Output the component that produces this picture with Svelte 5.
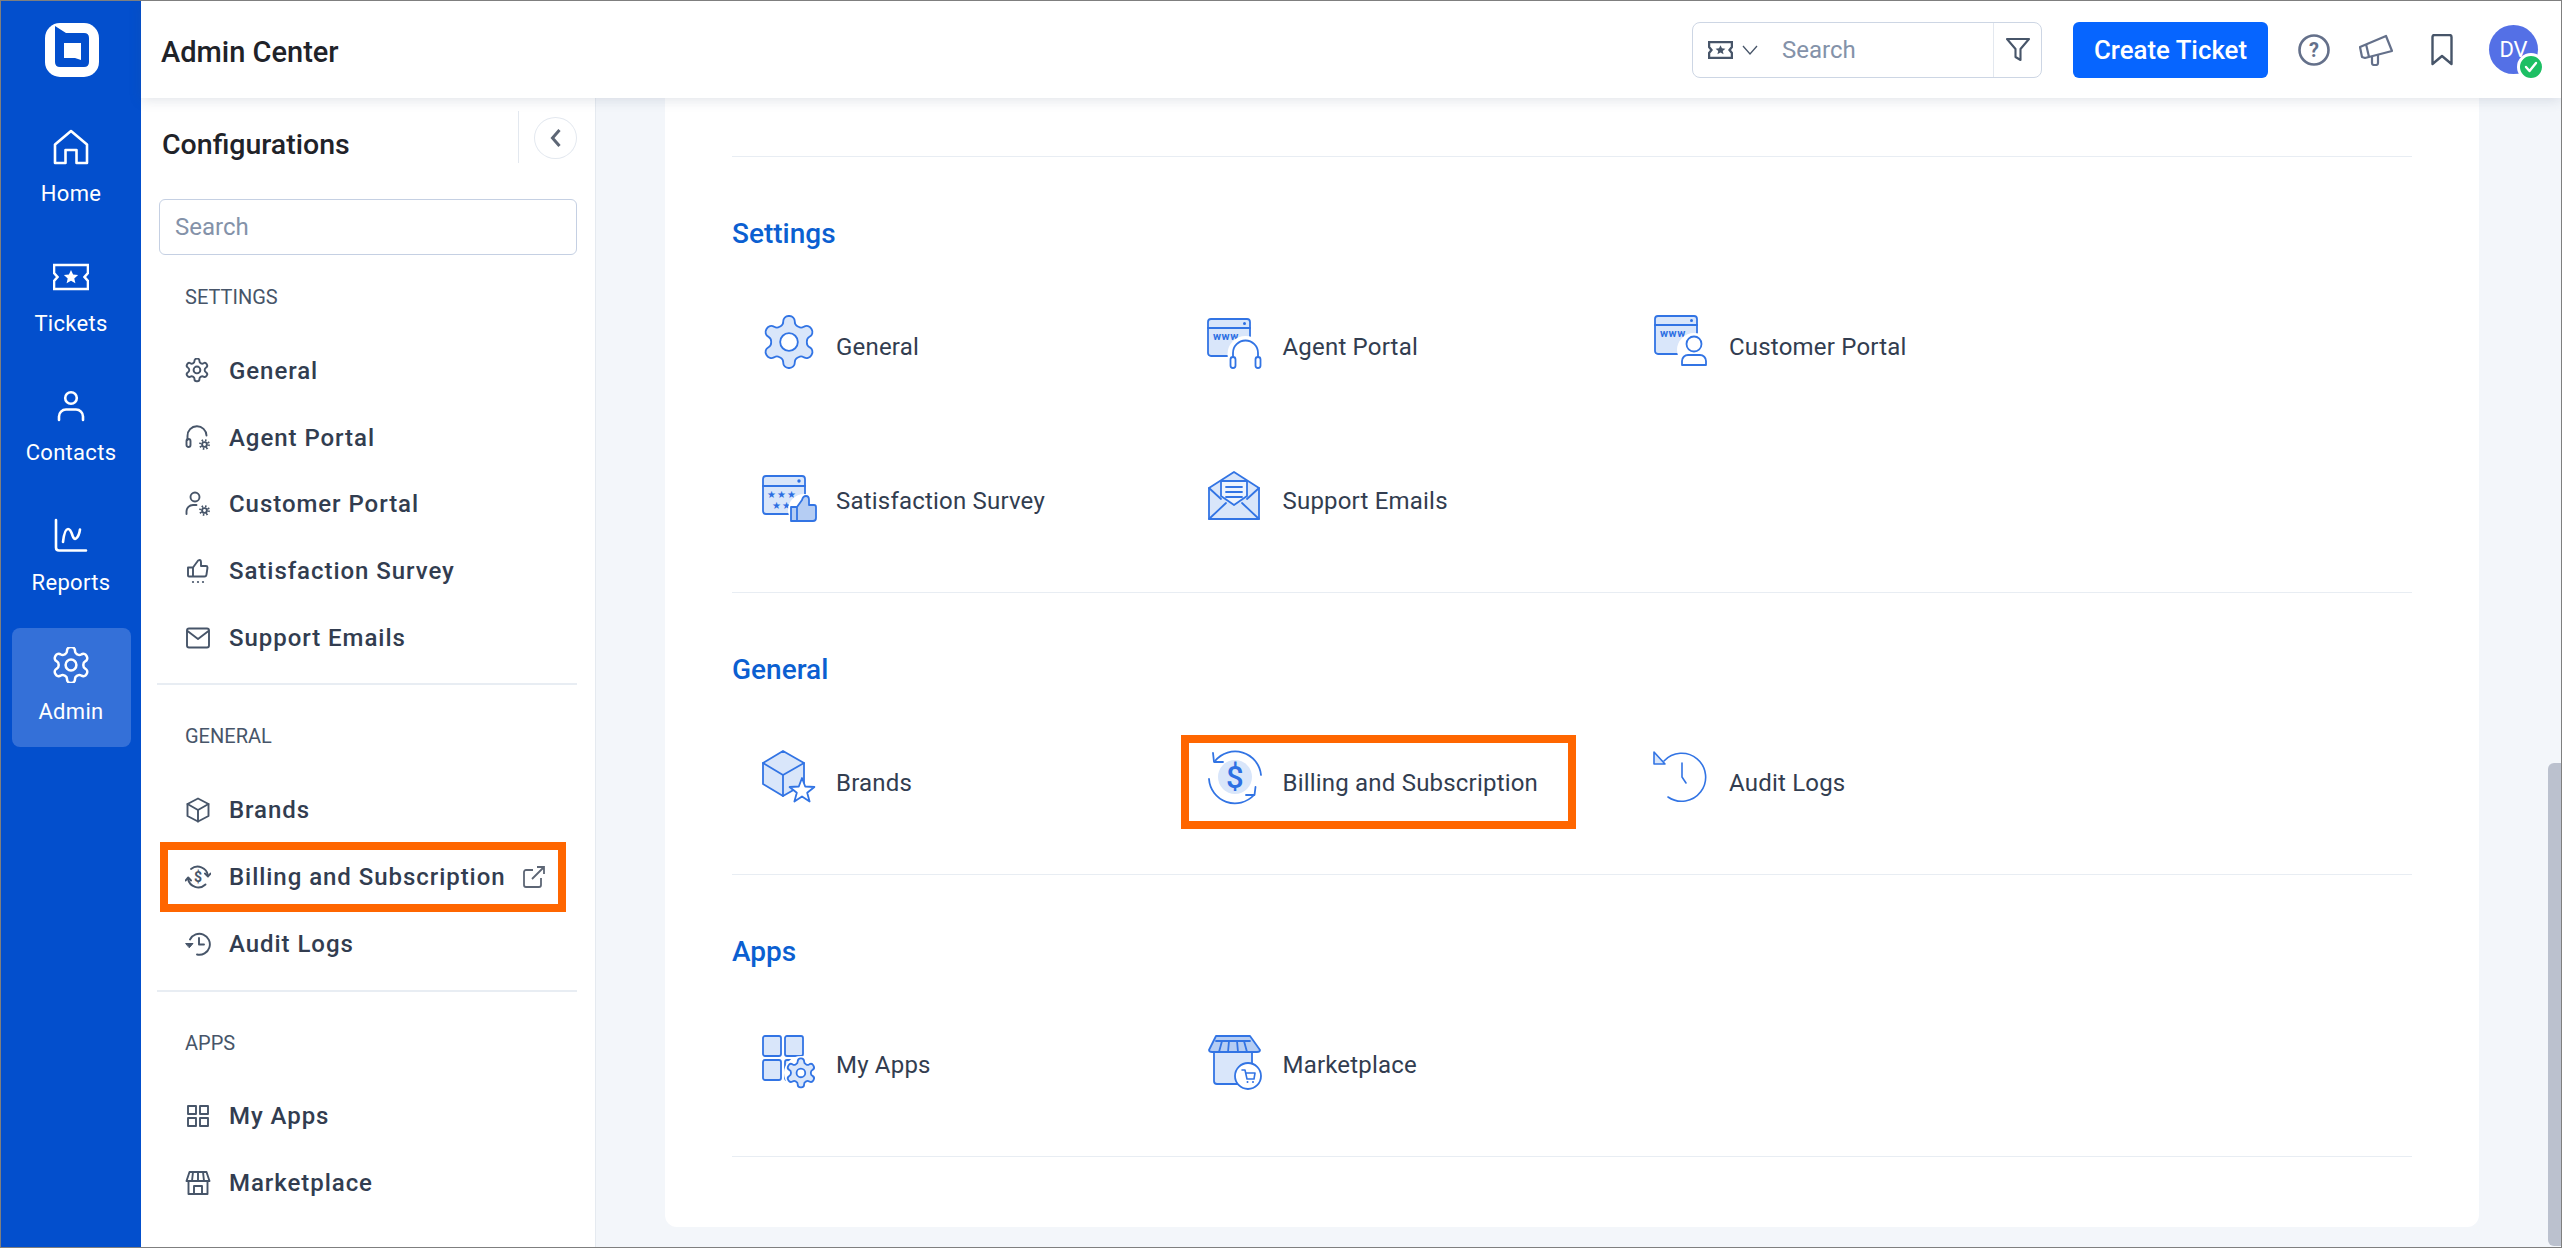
<script>
  const GEAR = 'M12.22 2h-.44a2 2 0 0 0-2 2v.18a2 2 0 0 1-1 1.73l-.43.25a2 2 0 0 1-2 0l-.15-.08a2 2 0 0 0-2.73.73l-.22.38a2 2 0 0 0 .73 2.73l.15.1a2 2 0 0 1 1 1.72v.51a2 2 0 0 1-1 1.74l-.15.09a2 2 0 0 0-.73 2.73l.22.38a2 2 0 0 0 2.73.73l.15-.08a2 2 0 0 1 2 0l.43.25a2 2 0 0 1 1 1.73V20a2 2 0 0 0 2 2h.44a2 2 0 0 0 2-2v-.18a2 2 0 0 1 1-1.73l.43-.25a2 2 0 0 1 2 0l.15.08a2 2 0 0 0 2.73-.73l.22-.39a2 2 0 0 0-.73-2.73l-.15-.08a2 2 0 0 1-1-1.74v-.5a2 2 0 0 1 1-1.74l.15-.09a2 2 0 0 0 .73-2.73l-.22-.38a2 2 0 0 0-2.73-.73l-.15.08a2 2 0 0 1-2 0l-.43-.25a2 2 0 0 1-1-1.73V4a2 2 0 0 0-2-2z'

  const nav = [
    { id: 'home', label: 'Home' },
    { id: 'tickets', label: 'Tickets' },
    { id: 'contacts', label: 'Contacts' },
    { id: 'reports', label: 'Reports' },
    { id: 'admin', label: 'Admin', active: true }
  ]

  const sections = [
    {
      title: 'Settings',
      items: [
        { id: 'general', label: 'General' },
        { id: 'agent', label: 'Agent Portal' },
        { id: 'customer', label: 'Customer Portal' },
        { id: 'survey', label: 'Satisfaction Survey' },
        { id: 'emails', label: 'Support Emails' }
      ]
    },
    {
      title: 'General',
      items: [
        { id: 'brands', label: 'Brands' },
        { id: 'billing', label: 'Billing and Subscription', marked: true, external: true },
        { id: 'audit', label: 'Audit Logs' }
      ]
    },
    {
      title: 'Apps',
      items: [
        { id: 'apps', label: 'My Apps' },
        { id: 'market', label: 'Marketplace' }
      ]
    }
  ]
</script>

{#snippet navIcon(id)}
  <svg width="36" height="36" viewBox="0 0 36 36" fill="none" stroke="#fff" stroke-width="2.6" stroke-linejoin="round" stroke-linecap="round">
    {#if id === 'home'}
      <path d="M2 15.500 18 2l16 13.500V34H23.500V21h-11v13H2z" />
    {:else if id === 'tickets'}
      <path d="M1 6h34v8l-3.500 4 3.500 4v8H1v-8l3.500-4L1 14z" stroke-linejoin="miter" />
      <path d="m18 11 2.100 4.600 5 .5-3.800 3.300 1.100 4.900-4.400-2.600-4.400 2.600 1.100-4.900-3.800-3.300 5-.5z" fill="#fff" stroke="none" />
    {:else if id === 'contacts'}
      <circle cx="18" cy="10" r="5.800" />
      <path d="M6 32v-3.500a7 7 0 0 1 7-7h10a7 7 0 0 1 7 7V32" />
    {:else if id === 'reports'}
      <path d="M3 2v27.500q0 3 3 3h27" />
      <path d="M10 24q1.500-13 5-13 2.500 0 4.500 6.500 1.500 4.500 3.500 3 3-2 4-9" />
    {:else}
      <g transform="translate(-3.600 -3.600) scale(1.8)" stroke-width="1.400">
        <path d={GEAR} />
        <circle cx="12" cy="12" r="3" />
      </g>
    {/if}
  </svg>
{/snippet}

{#snippet sideIcon(id)}
  <svg width="26" height="26" viewBox="0 0 26 26" fill="none" stroke="#475569" stroke-width="1.900" stroke-linecap="round" stroke-linejoin="round">
    {#if id === 'general'}
      <g transform="translate(-1.600 -1.600) scale(1.130)" stroke-width="1.700">
        <path d={GEAR} />
        <circle cx="12" cy="12" r="3" />
      </g>
    {:else if id === 'agent'}
      <path d="M2.500 15v-4a9.500 9.500 0 0 1 19-.5" />
      <rect x="1.500" y="14" width="4" height="8" rx="2" />
      <circle cx="19.500" cy="19.500" r="2.400" />
      <circle cx="19.500" cy="19.500" r="4.300" stroke-dasharray="1.500 1.880" stroke-width="2.200" stroke-linecap="butt" />
    {:else if id === 'customer'}
      <circle cx="10" cy="6" r="4.500" />
      <path d="M1.500 23v-2.500a6.500 6.500 0 0 1 6.500-6.500h3.500" />
      <circle cx="19.500" cy="19.500" r="2.400" />
      <circle cx="19.500" cy="19.500" r="4.300" stroke-dasharray="1.500 1.880" stroke-width="2.200" stroke-linecap="butt" />
    {:else if id === 'survey'}
      <path d="M3 9.500h5v9H4a1 1 0 0 1-1-1zM8 9.500l4-5.500q1-2 2.500-2t1.500 2.500v3.500h5q1.500 0 1.500 1.500l-1 7q-.2 2-2 2H8" />
      <circle cx="8" cy="24" r="1.100" fill="#475569" stroke="none" />
      <circle cx="13" cy="24" r="1.100" fill="#475569" stroke="none" />
      <circle cx="18" cy="24" r="1.100" fill="#475569" stroke="none" />
    {:else if id === 'emails'}
      <rect x="2" y="3.500" width="22" height="19" rx="2" />
      <path d="m2.500 6 10.500 8 10.500-8" />
    {:else if id === 'brands'}
      <path d="M13 1.500 23.500 7v12L13 24.500 2.500 19V7z" />
      <path d="M2.500 7 13 13l10.500-6M13 13v11.500" />
    {:else if id === 'billing'}
      <path d="M6 5A10.500 10.500 0 0 1 23 11.500M20.500 20.500A10.500 10.500 0 0 1 3 15" />
      <path d="m20 9.500 3 3 2.500-3M.5 16.500l2.700-3 2.800 3" />
      <text x="13.500" y="18" font-size="14" font-weight="700" text-anchor="middle" fill="#475569" stroke="none" font-family="Roboto, sans-serif">$</text>
    {:else if id === 'audit'}
      <path d="M5 8.500A10.500 10.500 0 1 1 12 23.500" />
      <path d="M1 12.500h7l-3.500 4z" fill="#475569" stroke-width="1" />
      <path d="M14 7v6.500h5" />
    {:else if id === 'apps'}
      <rect x="3" y="3" width="8" height="8" />
      <rect x="15" y="3" width="8" height="8" />
      <rect x="3" y="15" width="8" height="8" />
      <rect x="15" y="15" width="8" height="8" />
    {:else}
      <path d="M4.500 2h17l3 9h-23zM8 2l-1 9M13 2v9M18 2l1 9" />
      <path d="M3.500 11v13h19V11M9 24v-8h8v8" />
    {/if}
  </svg>
{/snippet}

{#snippet bigIcon(id)}
  <svg class="big" width="60" height="60" viewBox="0 0 60 60" fill="#d9e6fa" stroke="#3274e4" stroke-width="1.800" stroke-linejoin="round" stroke-linecap="round">
    {#if id === 'general'}
      <g transform="translate(-2.200 -2.200) scale(2.600)" stroke-width=".7">
        <path d={GEAR} />
        <circle cx="12" cy="12" r="3.400" fill="#fff" />
      </g>
    {:else if id === 'agent'}
      <rect x="1" y="6" width="42" height="37" rx="3" />
      <path d="M1 15h42" />
      <circle cx="37.500" cy="10.500" r="1.500" fill="#2c6fe3" stroke="none" />
      <text x="6" y="27" class="www">www</text>
      <circle cx="38.500" cy="41" r="18" fill="#fff" stroke="none" />
      <path d="M26 46v-6a12.500 12.500 0 0 1 25 0v6" fill="none" />
      <rect x="23.500" y="44" width="5" height="11" rx="2.500" fill="#fff" />
      <rect x="48.500" y="44" width="5" height="11" rx="2.500" fill="#fff" />
    {:else if id === 'customer'}
      <rect x="2" y="3" width="42" height="38" rx="3" />
      <path d="M2 12h42" />
      <circle cx="38.500" cy="7.500" r="1.500" fill="#2c6fe3" stroke="none" />
      <text x="7" y="24" class="www">www</text>
      <circle cx="41" cy="37" r="17" fill="#fff" stroke="none" />
      <circle cx="41" cy="31" r="7.500" fill="#fff" />
      <path d="M29 52v-4a6 6 0 0 1 6-6h12a6 6 0 0 1 6 6v4z" fill="#fff" />
    {:else if id === 'survey'}
      <rect x="3" y="9" width="42" height="38" rx="3" />
      <path d="M3 19h42" />
      <circle cx="39" cy="14" r="1.700" fill="#2c6fe3" stroke="none" />
      <text x="7" y="31" class="stars">★★★</text>
      <text x="12" y="42" class="stars">★★</text>
      <circle cx="44" cy="43" r="16" fill="#fff" stroke="none" />
      <path d="M31 40h6v14h-6zM37 40l5-7q1-4 4-4 3 0 3 4v5h5q2 0 2 2v11q0 3-3 3H37z" fill="#b5cdf3" />
    {:else if id === 'emails'}
      <path d="M2 21 27 5l25 16v31H2z" />
      <path d="M14 29V14h26v15l-13 9z" fill="#edf3fd" />
      <path d="M19 20h16M19 25h16M19 30h16" />
      <path d="M2 52l17-16M52 52 35 36M2 21l12 11M52 21 40 32" />
    {:else if id === 'brands'}
      <path d="M23 2 44 14v21L23 47 3 35V14z" />
      <path d="m3 14 20 12 21-12M23 26v21" />
      <path d="m42 29 3.200 8.500 9.200.5-7.200 5.700 2.400 8.800-7.600-5-7.600 5 2.400-8.800-7.200-5.700 9.200-.5z" fill="#fff" />
    {:else if id === 'billing'}
      <circle cx="28" cy="28" r="17" stroke="none" />
      <text x="28" y="39" class="dollar">$</text>
      <path d="M8 12A26 26 0 0 1 54 26M47 46A26 26 0 0 1 2 30" fill="none" />
      <path d="M6 4l1 9 9 0M39 46h8.500l1-8" fill="none" />
    {:else if id === 'audit'}
      <path d="M11 12A24 24 0 1 1 15 48" fill="none" stroke-width="1.600" />
      <path d="M1 3v12h11z" stroke-width="1.600" />
      <path d="M29 14v14l4 6" fill="none" stroke-width="1.600" />
    {:else if id === 'apps'}
      <rect x="3" y="5" width="18" height="20" rx="2" />
      <rect x="25" y="5" width="18" height="20" rx="2" />
      <rect x="3" y="29" width="18" height="20" rx="2" />
      <rect x="25" y="29" width="18" height="20" rx="2" />
      <circle cx="41" cy="42" r="17" fill="#fff" stroke="none" />
      <g transform="translate(23.500 24.500) scale(1.450)" stroke-width="1.250">
        <path d={GEAR} />
        <circle cx="12" cy="12" r="3" fill="#fff" />
      </g>
    {:else}
      <path d="M7 20h38v33H10q-3 0-3-3z" />
      <path d="M9 5h34l10 14q0 2-3 2H5q-3 0-3-2z" fill="#b5cdf3" />
      <path d="M9 10h34M15 10l-3 11M22 10l-1 11M30 10l1 11M37 10l3 11" />
      <circle cx="41" cy="45" r="13" fill="#fff" />
      <path d="M35 39h3l2 9h7l1-6h-9" fill="none" stroke-width="1.600" />
      <circle cx="40.500" cy="51" r="1" fill="#2c6fe3" stroke="none" />
      <circle cx="46" cy="51" r="1" fill="#2c6fe3" stroke="none" />
    {/if}
  </svg>
{/snippet}

<div class="window">
  <aside class="rail">
    <svg class="logo" width="54" height="54" viewBox="0 0 54 54">
      <rect width="54" height="54" rx="15" fill="#fff" />
      <path d="M10 3 21 10h18q5 0 5 5v24q0 5-5 5H15q-5 0-5-5z" fill="#034fcd" />
      <path d="M19 20h17v17l-6-2H19z" fill="#fff" />
    </svg>
    <nav class="rail-nav">
      {#each nav as item}
        <a class="rail-item" class:active={item.active} href="#top">
          {@render navIcon(item.id)}
          <span>{item.label}</span>
        </a>
      {/each}
    </nav>
  </aside>

  <div class="page">
    <header class="topbar">
      <h1>Admin Center</h1>
      <div class="global-search">
        <svg class="type-icon" width="25" height="18" viewBox="0 0 36 26" fill="none" stroke="#475569" stroke-width="3.400">
          <path d="M1.500 1.500h33v7l-3.500 4.500 3.500 4.500v7h-33v-7L5 13 1.500 8.500z" />
          <path d="m18 6 2.100 4.600 5 .5-3.800 3.300 1.100 4.900-4.400-2.600-4.400 2.600 1.100-4.900-3.800-3.300 5-.5z" fill="#475569" stroke="none" />
        </svg>
        <svg class="chev" width="16" height="10" viewBox="0 0 16 10" fill="none" stroke="#475569" stroke-width="1.300"><path d="m1 1 7 8 7-8" /></svg>
        <input placeholder="Search" />
        <span class="filter">
          <svg width="24" height="25" viewBox="0 0 24 25" fill="none" stroke="#475569" stroke-width="2.100" stroke-linejoin="round"><path d="M1 2h22l-8.500 10v11l-5-3v-8z" /></svg>
        </span>
      </div>
      <button class="create">Create Ticket</button>
      <svg class="help" width="32" height="32" viewBox="0 0 32 32" fill="none" stroke="#64708a" stroke-width="2.600">
        <circle cx="16" cy="16" r="14.500" />
        <text x="16" y="23" font-size="20" font-weight="700" text-anchor="middle" fill="#64708a" stroke="none" font-family="Roboto, sans-serif">?</text>
      </svg>
      <svg class="mega" width="36" height="32" viewBox="0 0 36 32" fill="none" stroke="#64708a" stroke-width="2.200" stroke-linejoin="round">
        <path d="M2 13 28 2l6 15-27 7-3-1z" />
        <path d="M8 10 11 23" />
        <path d="M14 22.500V29a2 2 0 0 0 2 2h2a2 2 0 0 0 2-2v-8" />
      </svg>
      <svg class="mark" width="22" height="32" viewBox="0 0 22 32" fill="none" stroke="#475569" stroke-width="2.400" stroke-linejoin="round"><path d="M1.500 3q0-2 2-2h15q2 0 2 2v27L11 22l-9.500 8z" /></svg>
      <div class="avatar">
        DV
        <span class="badge">
          <svg width="14" height="12" viewBox="0 0 14 12" fill="none" stroke="#fff" stroke-width="2.400" stroke-linecap="round" stroke-linejoin="round"><path d="m2 6 3.500 4L12 2" /></svg>
        </span>
      </div>
    </header>

    <div class="body">
      <aside class="config">
        <div class="config-head">
          <h2>Configurations</h2>
          <button class="collapse" aria-label="Collapse">
            <svg width="12" height="20" viewBox="0 0 12 20" fill="none" stroke="#5d6675" stroke-width="3"><path d="M10 2 3 10l7 8" /></svg>
          </button>
        </div>
        <input class="config-search" placeholder="Search" />
        {#each sections as section, i}
          <div class="group" class:first={i === 0}>
            <div class="group-label">{section.title.toUpperCase()}</div>
            {#each section.items as item}
              <a class="side-item" class:marked={item.marked} href="#top">
                {@render sideIcon(item.id)}
                <span>{item.label}</span>
                {#if item.external}
                  <svg class="ext" width="22" height="22" viewBox="0 0 22 22" fill="none" stroke="#5d6675" stroke-width="1.800"><path d="M10 4H3a2 2 0 0 0-2 2v13a2 2 0 0 0 2 2h13a2 2 0 0 0 2-2v-7M9 13 21 1M14 1h7v7" /></svg>
                {/if}
              </a>
            {/each}
          </div>
        {/each}
      </aside>

      <main class="main">
        <div class="card">
          {#each sections as section}
            <section class="block">
              <h3>{section.title}</h3>
              <div class="tiles">
                {#each section.items as item}
                  <a class="tile" class:marked={item.marked} href="#top">
                    {@render bigIcon(item.id)}
                    <span>{item.label}</span>
                  </a>
                {/each}
              </div>
            </section>
          {/each}
        </div>
        <div class="scroll-thumb"></div>
      </main>
    </div>
  </div>

  <svg class="cursor" width="17" height="28" viewBox="0 0 17 28" fill="#fff" stroke="#333" stroke-width="1.100" stroke-linejoin="round">
    <path d="M1 1v20l5-4 4 9 3-1-4-9h7z" />
  </svg>
</div>

<style>
  :global(body) {
    margin: 0;
    font-family: Roboto, 'Liberation Sans', sans-serif;
  }

  a {
    color: inherit;
    text-decoration: none;
  }

  input {
    font: inherit;
    border: none;
    outline: none;
    background: none;
    color: #2b3548;
  }

  input::placeholder {
    color: #8492a9;
    opacity: 1;
  }

  .window {
    position: relative;
    width: 2562px;
    height: 1248px;
    box-sizing: border-box;
    border: 1px solid #7f7f7f;
    display: flex;
    overflow: hidden;
    background: #fff;
  }

  /* ── Left rail ── */
  .rail {
    width: 140px;
    flex-shrink: 0;
    background: #034fcd;
    display: flex;
    flex-direction: column;
    align-items: center;
  }

  .logo {
    margin: 22px 0 0 1px;
  }

  .rail-nav {
    margin-top: 33px;
    display: flex;
    flex-direction: column;
    gap: 10.5px;
    align-items: center;
  }

  .rail-item {
    width: 119px;
    height: 119px;
    box-sizing: border-box;
    padding-top: 19px;
    border-radius: 8px;
    display: flex;
    flex-direction: column;
    align-items: center;
    gap: 15px;
    color: #fff;
    font-size: 22px;
    letter-spacing: 0.3px;
    line-height: 28px;
  }

  .rail-item.active {
    background: #3470d8;
  }

  /* ── Top bar ── */
  .page {
    flex: 1;
    min-width: 0;
    display: flex;
    flex-direction: column;
  }

  .topbar {
    height: 97px;
    flex-shrink: 0;
    box-sizing: border-box;
    padding: 0 23px 0 20px;
    display: flex;
    align-items: center;
    background: #fff;
    box-shadow: 0 2px 12px rgba(60, 80, 110, 0.16);
    position: relative;
    z-index: 2;
  }

  h1 {
    margin: 4px auto 0 0;
    font-size: 29px;
    font-weight: 500;
    color: #1f2329;
  }

  .global-search {
    width: 350px;
    height: 56px;
    box-sizing: border-box;
    border: 1px solid #cdd6e4;
    border-radius: 8px;
    display: flex;
    align-items: center;
    padding-left: 15px;
    font-size: 24px;
  }

  .chev {
    margin-left: 9px;
  }

  .global-search input {
    flex: 1;
    min-width: 0;
    margin-left: 24px;
    padding: 0;
  }

  .filter {
    width: 47px;
    height: 100%;
    flex-shrink: 0;
    display: flex;
    align-items: center;
    justify-content: center;
    border-left: 1px solid #e3e8ef;
  }

  .create {
    margin-left: 31px;
    width: 195px;
    height: 56px;
    border: none;
    border-radius: 6px;
    background: #0665ff;
    color: #fff;
    font: 500 25.800px Roboto, sans-serif;
  }

  .help {
    margin-left: 30px;
  }

  .mega {
    margin-left: 28px;
  }

  .mark {
    margin-left: 37px;
  }

  .avatar {
    margin-left: 36px;
    width: 49px;
    height: 49px;
    border-radius: 50%;
    background: #5470e6;
    color: #fff;
    font-size: 22px;
    display: flex;
    align-items: center;
    justify-content: center;
    position: relative;
  }

  .badge {
    position: absolute;
    right: -7px;
    bottom: -7px;
    width: 22px;
    height: 22px;
    border: 3px solid #fff;
    border-radius: 50%;
    background: #1dbf64;
    display: flex;
    align-items: center;
    justify-content: center;
  }

  /* ── Config sidebar ── */
  .body {
    flex: 1;
    min-height: 0;
    display: flex;
  }

  .config {
    width: 455px;
    flex-shrink: 0;
    box-sizing: border-box;
    border-right: 1px solid #e5eaf0;
    padding: 13px 18px 0;
    background: #fff;
  }

  .config-head {
    height: 52px;
    display: flex;
    align-items: flex-start;
  }

  h2 {
    margin: 20px auto 0 3px;
    font-size: 28.500px;
    line-height: 28px;
    font-weight: 500;
    color: #1f2329;
  }

  .collapse {
    width: 59px;
    height: 52px;
    padding: 6px 0 4px 14px;
    background: none;
    border: none;
    border-left: 1px solid #e3e8ef;
    box-sizing: border-box;
  }

  .collapse svg {
    box-sizing: border-box;
    width: 43px;
    height: 42px;
    padding: 10px 0;
    border: 1px solid #e3e8ef;
    border-radius: 50%;
  }

  .config-search {
    display: block;
    width: 100%;
    height: 56px;
    box-sizing: border-box;
    margin-top: 36px;
    padding: 0 15px;
    border: 1px solid #c5d0e3;
    border-radius: 6px;
    font-size: 24px;
  }

  .group {
    margin: 0 0 0 -2px;
    padding-top: 37px;
    border-top: 2px solid #e8edf3;
    padding-bottom: 12.500px;
  }

  .group.first {
    border-top: none;
    padding-top: 28px;
  }

  .group-label {
    padding-left: 28px;
    margin-bottom: 26.500px;
    font-size: 20px;
    line-height: 28px;
    color: #475569;
  }

  .side-item {
    height: 66.7px;
    padding-left: 28px;
    display: flex;
    align-items: center;
    gap: 18px;
    font-size: 24px;
    font-weight: 500;
    letter-spacing: 0.95px;
    color: #323d50;
    position: relative;
  }

  .ext {
    margin-left: -1px;
  }

  .side-item.marked::after {
    content: '';
    position: absolute;
    left: 3px;
    width: 406px;
    top: -2px;
    bottom: -2px;
    border: 8px solid #ff6600;
    box-sizing: border-box;
  }

  /* ── Main ── */
  .main {
    flex: 1;
    min-width: 0;
    background: #f3f6fa;
    padding-left: 69px;
    position: relative;
  }

  .card {
    width: 1814px;
    height: 1129px;
    box-sizing: border-box;
    padding: 58px 67px 0 67px;
    background: #fff;
    border-radius: 0 0 12px 12px;
  }

  .block {
    padding: 60px 0 61px;
    border-bottom: 1px solid #e8edf3;
  }

  .block:first-child {
    border-top: 1px solid #e8edf3;
  }

  h3 {
    margin: 0 0 66px;
    font-size: 28px;
    line-height: 34px;
    font-weight: 500;
    color: #0b5fd1;
  }

  .tiles {
    display: grid;
    grid-template-columns: repeat(3, 446.5px);
    grid-auto-rows: 60px;
    row-gap: 94px;
    padding-left: 28px;
  }

  .tile {
    position: relative;
    display: flex;
    align-items: center;
    gap: 16px;
    font-size: 24px;
    letter-spacing: 0.2px;
    color: #323d50;
  }

  .big {
    flex-shrink: 0;
    margin-top: -8px;
    overflow: visible;
  }

  .www {
    font: 700 11px Roboto, sans-serif;
    fill: #2c6fe3;
    stroke: none;
    letter-spacing: 0.5px;
  }

  .stars {
    font: 10px 'DejaVu Sans', sans-serif;
    fill: #2c6fe3;
    stroke: none;
    letter-spacing: 1px;
  }

  .dollar {
    font: 500 31px Roboto, sans-serif;
    fill: #2c6fe3;
    stroke: none;
    text-anchor: middle;
  }

  .tile.marked::after {
    content: '';
    position: absolute;
    left: -26px;
    top: -18px;
    width: 395px;
    height: 94px;
    border: 8px solid #ff6600;
    box-sizing: border-box;
  }

  .scroll-thumb {
    position: absolute;
    right: 0;
    top: 665px;
    width: 13px;
    height: 483px;
    border-radius: 6px 0 0 6px;
    background: #bbc1ce;
  }

  .cursor {
    position: absolute;
    left: 2411px;
    top: 0;
  }
</style>
